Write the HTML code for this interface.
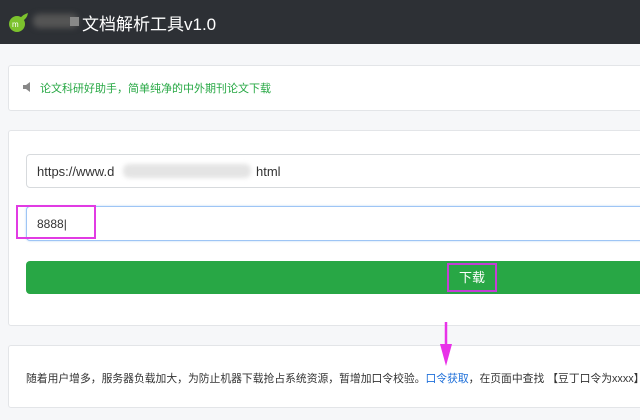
<!DOCTYPE html>
<html><head><meta charset="utf-8"><style>
body{margin:0;width:640px;height:420px;overflow:hidden;background:#f6f7f9;font-family:"Liberation Sans","Noto Sans CJK SC",sans-serif;position:relative}
.hdr{position:absolute;left:0;top:0;width:640px;height:44px;background:#2d3035}
.box{position:absolute;left:8px;width:640px;background:#fff;border:1px solid #e3e5e8;border-radius:3px}
.inp{position:absolute;left:26px;width:620px;background:#fff;border:1px solid #d7dadd;border-radius:4px;font-size:13px;color:#333}
</style></head><body>
<div class="hdr">
<svg style="position:absolute;left:7px;top:12px" width="22" height="22"><circle cx="10" cy="12" r="8" fill="#7cc22d"/><path d="M13 6 Q17 2 21 1 Q20 7 15 9Z" fill="#7cc22d"/><text x="5" y="15" font-size="8" fill="#fff" font-family="Liberation Sans">m</text></svg>
<div style="position:absolute;left:33px;top:14px;width:45px;height:14px;background:#555;border-radius:6px;filter:blur(3px)"></div>
<div style="position:absolute;left:70px;top:17px;width:9px;height:9px;background:#888"></div>
<div style="position:absolute;left:82px;top:10px;font-size:17px;color:#fff">文档解析工具v1.0</div>
</div>
<div class="box" style="top:65px;height:44px">
<svg style="position:absolute;left:13px;top:15px" width="12" height="12"><path d="M1 4h3l4-3v10l-4-3H1z" fill="#888"/></svg>
<div style="position:absolute;left:31px;top:14px;font-size:11px;color:#27a844">论文科研好助手，简单纯净的中外期刊论文下载</div>
</div>
<div class="box" style="top:130px;height:194px"></div>
<div class="inp" style="top:154px;height:32px"><span style="position:absolute;left:10px;top:9px">https://www.d</span>
<div style="position:absolute;left:96px;top:9px;width:128px;height:14px;background:#e4e4e4;border-radius:6px;filter:blur(2px)"></div>
<span style="position:absolute;left:229px;top:9px">html</span></div>
<div class="inp" style="top:206px;height:33px;border-color:#9ec5f5;box-shadow:0 0 2px #bcd7f7"><span style="position:absolute;left:10px;top:10px;font-size:12px">8888|</span></div>
<div style="position:absolute;left:16px;top:205px;width:80px;height:34px;border:2px solid #e13be3;box-sizing:border-box"></div>
<div style="position:absolute;left:26px;top:261px;width:620px;height:33px;background:#28a745;border-radius:4px"></div>
<div style="position:absolute;left:447px;top:263px;width:50px;height:29px;border:2px solid #c43ed6;box-sizing:border-box;color:#fff;font-size:13px;text-align:center;line-height:25px">下载</div>
<div class="box" style="top:345px;height:61px">
<div style="position:absolute;left:17px;top:24px;font-size:10.8px;color:#333;white-space:nowrap">随着用户增多，服务器负载加大，为防止机器下载抢占系统资源，暂增加口令校验。<span style="color:#1e6fd9">口令获取</span>，在页面中查找 【豆丁口令为xxxx】</div>
</div>
<svg style="position:absolute;left:438px;top:320px" width="16" height="48"><path d="M8 2 L8 30" stroke="#e832e8" stroke-width="2.5"/><path d="M2 24 L14 24 L8 46Z" fill="#e832e8"/></svg>
</body></html>
